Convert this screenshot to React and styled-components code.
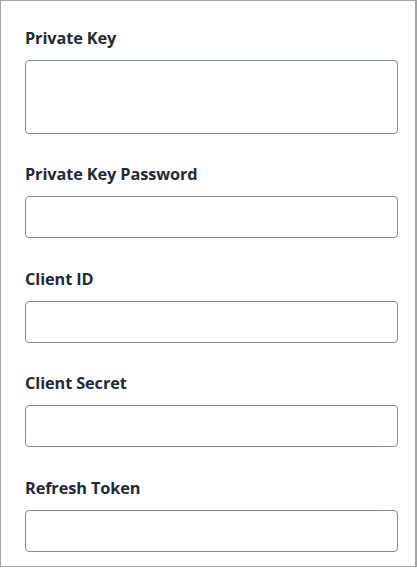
import React from "react";
import styled, { createGlobalStyle } from "styled-components";

const GlobalStyle = createGlobalStyle`
  html, body {
    margin: 0;
    padding: 0;
    background: #ffffff;
  }
  body {
    font-family: "Open Sans", "Liberation Sans", sans-serif;
  }
`;

const fields = [
  { id: "privateKey", label: "Private Key", multiline: true },
  { id: "privateKeyPassword", label: "Private Key Password" },
  { id: "clientId", label: "Client ID" },
  { id: "clientSecret", label: "Client Secret" },
  { id: "refreshToken", label: "Refresh Token" },
];

const App = () => {
  return (
    <>
      <GlobalStyle />
      <Frame>
        <Form>
          {fields.map((field) => (
            <Field key={field.id}>
              <Label htmlFor={field.id}>{field.label}</Label>
              {field.multiline ? (
                <TextArea id={field.id} />
              ) : (
                <Input id={field.id} type="text" />
              )}
            </Field>
          ))}
        </Form>
      </Frame>
    </>
  );
};

const Frame = styled.div`
  box-sizing: border-box;
  width: 417px;
  height: 567px;
  border: 1px solid #a3a3a3;
  border-right-width: 2px;
  background: #ffffff;
  overflow: hidden;
`;
const Form = styled.div`
  display: flex;
  flex-direction: column;
  gap: 30.4px;
  padding: 27px 0 0 24px;
  width: 373px;
`;
const Field = styled.div`
  display: flex;
  flex-direction: column;
  gap: 12px;
`;
const Label = styled.label`
  font-size: 16.3px;
  line-height: 20px;
  font-weight: 700;
  letter-spacing: -0.1px;
  color: #1f2a37;
`;
const inputBase = `
  box-sizing: border-box;
  width: 100%;
  margin: 0;
  border: 1px solid #7f8b97;
  border-radius: 4px;
  background: #ffffff;
  font-family: inherit;
  font-size: 15px;
  padding: 8px 10px;
  outline: none;
`;
const Input = styled.input`
  ${inputBase}
  height: 42px;
`;
const TextArea = styled.textarea`
  ${inputBase}
  display: block;
  height: 74px;
  resize: none;
`;

export default App;
